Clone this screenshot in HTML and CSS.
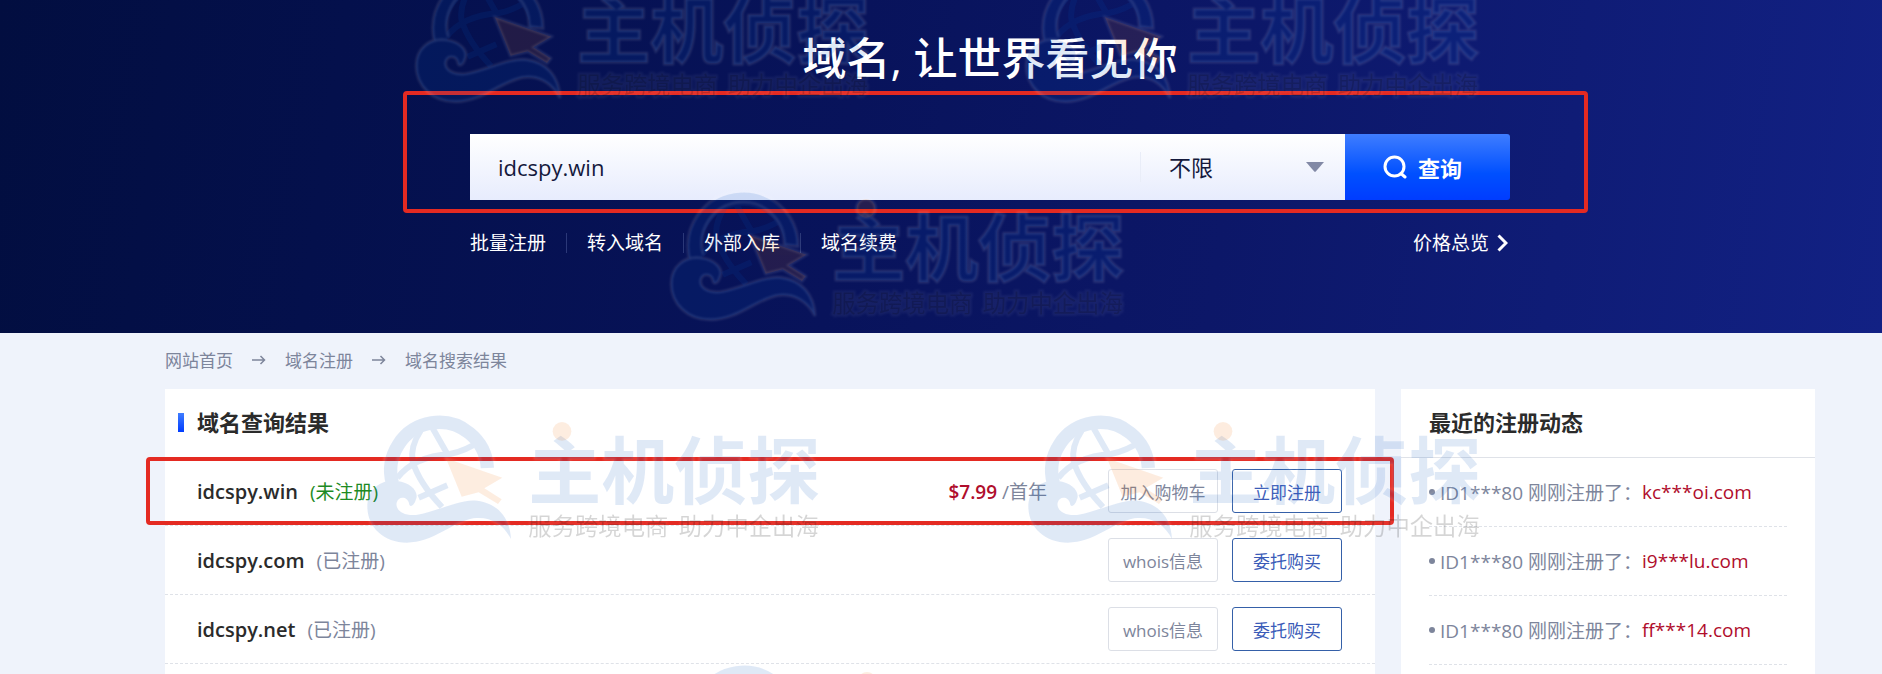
FILE: index.html
```html
<!DOCTYPE html>
<html lang="zh-CN">
<head>
<meta charset="utf-8">
<title>域名搜索结果</title>
<link rel="stylesheet" href="styles.css">
</head>
<body>
<header class="hero">
  <div class="hero-inner">
    <h1 class="hero-title">域名, 让世界看见你</h1>
    <form class="search">
      <input class="search-input" type="text" value="idcspy.win" aria-label="域名">
      <div class="suffix">
        <select class="suffix-select" aria-label="后缀"><option>不限</option></select>
        <svg class="suffix-arrow" viewBox="0 0 18 10" aria-hidden="true"><path d="M0 0H18L10 9.300Q9 10.300 8 9.300Z" fill="#8289a6"/></svg>
      </div>
      <button class="search-button" type="button">
        <svg class="search-icon" viewBox="0 0 24 24" fill="none" stroke="#fff" stroke-width="3" stroke-linecap="round" aria-hidden="true"><circle cx="11.500" cy="11.500" r="9.500"/><path d="M18 18.500L22 22"/></svg>
        查询
      </button>
      <span class="callout callout-search"></span>
    </form>
    <nav class="hero-nav">
      <a class="hero-link" href="#">批量注册</a>
      <a class="hero-link" href="#">转入域名</a>
      <a class="hero-link" href="#">外部入库</a>
      <a class="hero-link" href="#">域名续费</a>
      <a class="price-link" href="#">价格总览
        <svg class="chevron" viewBox="0 0 11 18" fill="none" stroke="#fff" stroke-width="3" aria-hidden="true"><path d="M1.500 1.500L9 9L1.500 16.500"/></svg>
      </a>
    </nav>
  </div>
</header>

<main class="page">
  <nav class="crumbs">
    <a class="crumb" href="#">网站首页</a>
    <svg class="crumb-arrow" viewBox="0 0 14 10" aria-hidden="true"><path d="M0 5H12.500M8.500 1L12.500 5L8.500 9"/></svg>
    <a class="crumb" href="#">域名注册</a>
    <svg class="crumb-arrow" viewBox="0 0 14 10" aria-hidden="true"><path d="M0 5H12.500M8.500 1L12.500 5L8.500 9"/></svg>
    <span class="crumb">域名搜索结果</span>
  </nav>
  <div class="columns">
    <section class="card results">
      <h2 class="card-title results-title">域名查询结果</h2>
      <ul class="list">
        <li class="result">
          <strong class="domain">idcspy.win</strong>
          <span class="status status-free">(未注册)</span>
          <span class="price"><b class="amount">$7.99</b> /首年</span>
          <button class="btn" type="button">加入购物车</button>
          <button class="btn btn-primary" type="button">立即注册</button>
          <span class="callout callout-row"></span>
        </li>
        <li class="result">
          <strong class="domain">idcspy.com</strong>
          <span class="status">(已注册)</span>
          <button class="btn" type="button">whois信息</button>
          <button class="btn btn-primary" type="button">委托购买</button>
        </li>
        <li class="result">
          <strong class="domain">idcspy.net</strong>
          <span class="status">(已注册)</span>
          <button class="btn" type="button">whois信息</button>
          <button class="btn btn-primary" type="button">委托购买</button>
        </li>
      </ul>
    </section>
    <aside class="card recent">
      <h2 class="card-title recent-title">最近的注册动态</h2>
      <ul class="list recent-list">
        <li class="event">ID1***80 刚刚注册了：<a class="event-domain" href="#">kc***oi.com</a></li>
        <li class="event">ID1***80 刚刚注册了：<a class="event-domain" href="#">i9***lu.com</a></li>
        <li class="event">ID1***80 刚刚注册了：<a class="event-domain" href="#">ff***14.com</a></li>
      </ul>
    </aside>
  </div>
</main>

<div class="marks" aria-hidden="true">
  <svg class="defs">
    <defs>
      <filter id="soft"><feGaussianBlur stdDeviation="3"/></filter>
      <g id="blue">
        <path d="M97 219A145 145 0 1 1 382 174" fill="none" stroke-width="40" class="line"/>
        <path d="M112 204Q160 140 270 132Q320 122 360 92M218 55L262 132M182 62Q150 110 158 155Q178 220 246 291M176 263L262 226" fill="none" stroke-width="18" class="line"/>
      </g>
      <path id="wave" d="M22 290C22 240 60 206 112 213C152 218 178 245 168 268C162 290 148 294 147 280C143 260 116 256 110 278C106 300 128 318 168 315C235 304 300 265 352 272C412 280 450 322 453 387C430 342 390 318 340 325C270 340 220 398 140 398C70 398 22 350 22 290Z"/>
      <path id="pointer" d="M258 145L427 203L373 235L425 268L414 282L356 247L305 260Z"/>
      <circle id="dot" cx="606" cy="64" r="28"/>
      <text id="name" x="505" y="264" class="mark-name">主机侦探</text>
      <text id="slogan" x="505" y="374" class="mark-slogan">服务跨境电商  助力中企出海</text>
      <g id="mark">
        <g class="glow" filter="url(#soft)">
          <path d="M76 214A165 165 0 1 1 402 178L361 172A124 124 0 1 0 118 204" fill="none"/>
          <use href="#wave"/><use href="#pointer"/><use href="#dot"/><use href="#name"/>
        </g>
        <g class="glow glow-thin" filter="url(#soft)"><use href="#slogan"/></g>
        <g class="mark-blue"><use href="#blue"/><use href="#wave"/><use href="#name"/></g>
        <g class="mark-orange"><use href="#pointer"/><use href="#dot"/></g>
        <g class="mark-dark"><use href="#slogan"/></g>
      </g>
    </defs>
  </svg>
  <svg class="mark mark-1" viewBox="9 0 1392 420"><use href="#mark"/></svg>
  <svg class="mark mark-2" viewBox="9 0 1392 420"><use href="#mark"/></svg>
  <svg class="mark mark-3" viewBox="9 0 1392 420"><use href="#mark"/></svg>
  <svg class="mark mark-4" viewBox="9 0 1392 420"><use href="#mark"/></svg>
  <svg class="mark mark-5" viewBox="9 0 1392 420"><use href="#mark"/></svg>
  <svg class="mark mark-6" viewBox="9 0 1392 420"><use href="#mark"/></svg>
</div>
</body>
</html>
```
FILE: styles.css
```css
* { box-sizing: border-box; }

body {
  position: relative;
  display: flex;
  flex-direction: column;
  min-height: 100vh;
  margin: 0;
  background: #eff3fb;
  color: #7d859b;
  font-family: "Open Sans", "Noto Sans CJK SC", sans-serif;
  font-size: 19px;
}

a { color: inherit; text-decoration: none; }
button, input, select { font-family: inherit; }

.hero {
  padding: 26px 67px 76px 165px;
  background: linear-gradient(98deg, #020e40 0%, #04104c 18%, #08135b 45%, #0c1768 65%, #122184 100%);
  color: #fff;
}
.hero-inner { max-width: 1040px; margin: 0 auto; }
.hero-title {
  margin: 0 0 44px;
  font-size: 44px;
  font-weight: 500;
  line-height: 64px;
  text-align: center;
}

.search { position: relative; display: flex; height: 66px; }
.search-input {
  flex: 1;
  min-width: 0;
  padding: 0 28px;
  border: 0;
  background: linear-gradient(#fff, #e7ecfd);
  color: #14193c;
  font-size: 22px;
}
.suffix {
  display: flex;
  align-items: center;
  width: 205px;
  padding-right: 21px;
  background: linear-gradient(#fff, #e7ecfd);
}
.suffix-select {
  flex: 1;
  height: 30px;
  padding: 0 0 0 28px;
  border: 0;
  border-left: 1px solid #e9edf8;
  appearance: none;
  background: none;
  color: #14193c;
  font-size: 22px;
  line-height: 30px;
}
.suffix-arrow { width: 18px; height: 10px; }
.search-button {
  display: flex;
  align-items: center;
  justify-content: center;
  gap: 11px;
  width: 165px;
  padding: 0 10px 0 0;
  border: 0;
  border-radius: 0 3px 3px 0;
  background: linear-gradient(#3f7dff, #0050ff 60%, #003cff);
  color: #fff;
  font-size: 22px;
  font-weight: 700;
}
.search-icon { width: 24px; height: 24px; }

.hero-nav { display: flex; margin-top: 29px; line-height: 28px; }
.hero-link { display: flex; align-items: center; }
.hero-link + .hero-link::before {
  content: "";
  width: 1px;
  height: 20px;
  margin: 0 20px;
  background: #2b3878;
}
.price-link { display: flex; align-items: center; gap: 8px; margin: 0 2px 0 auto; }
.chevron { width: 11px; height: 18px; }

.page { display: flex; flex: 1; flex-direction: column; padding: 0 67px 0 165px; }
.crumbs {
  display: flex;
  align-items: center;
  gap: 19px;
  height: 56px;
  padding-bottom: 3px;
  font-size: 17px;
}
.crumb-arrow { width: 14px; height: 10px; fill: none; stroke: #7d859b; stroke-width: 1.500; }
.columns { display: flex; flex: 1; gap: 26px; }
.card { background: #fff; }
.results { flex: 1; }
.recent { width: 414px; }
.card-title {
  margin: 0;
  padding-bottom: 2px;
  color: #2b2b2b;
  font-size: 22px;
  font-weight: 700;
  line-height: 66px;
}
.results-title { display: flex; align-items: center; gap: 13px; padding-left: 13px; }
.results-title::before {
  content: "";
  width: 6px;
  height: 19px;
  background: linear-gradient(#3f7dff, #003cff);
}
.list { margin: 0; padding: 0; list-style: none; }
.result {
  position: relative;
  display: flex;
  align-items: center;
  height: 69px;
  padding: 0 33px 0 32px;
  border-bottom: 1px dashed #dfe2e8;
}
.domain { margin-right: 12px; color: #2b2b2b; font-size: 20px; font-weight: 600; }
.status { margin-right: auto; }
.status-free { color: #1d8a24; }
.price { margin-right: 61px; }
.amount { color: #b00d2c; font-weight: 600; }
.btn {
  width: 110px;
  height: 44px;
  padding: 0;
  border: 1px solid #dcdfe6;
  border-radius: 3px;
  background: #fff;
  color: #7d859b;
  font-size: 17px;
}
.btn-primary { margin-left: 14px; border-color: #3560a8; color: #3a5bb8; }

.recent-title { padding-left: 28px; border-bottom: 1px solid #dfe2e8; }
.recent-list { padding: 0 28px; }
.event {
  display: flex;
  align-items: center;
  height: 69px;
  border-bottom: 1px dashed #dfe2e8;
  white-space: pre;
}
.event::before {
  content: "";
  width: 6px;
  height: 6px;
  margin-right: 5px;
  border-radius: 50%;
  background: #7d859b;
}
.event-domain { color: #b00d2c; }

.callout { position: absolute; border: 4px solid #e42a22; border-radius: 4px; pointer-events: none; }
.callout-search { inset: -43px -78px -13px -67px; }
.callout-row { inset: 0 -19px; }

.marks { position: absolute; inset: 0; overflow: hidden; pointer-events: none; }
.defs { position: absolute; width: 0; height: 0; }
.mark { position: absolute; width: 464px; height: 140px; }
.mark-1 { left: 412px; top: -31px; }
.mark-2 { left: 1022px; top: -31px; }
.mark-3 { left: 667px; top: 187px; }
.mark-4 { left: 363px; top: 410px; }
.mark-5 { left: 1024px; top: 410px; }
.mark-6 { left: 668px; top: 660px; }
.mark-name { font-family: "Noto Sans CJK SC", sans-serif; font-size: 219px; font-weight: 700; }
.mark-slogan { font-family: "Noto Sans CJK SC", sans-serif; font-size: 70px; white-space: pre; }
.mark-blue { opacity: .12; fill: #0052be; }
.line { stroke: #0052be; }
.mark-orange { opacity: .12; fill: #f06c00; }
.mark-dark { opacity: .16; fill: #000; }
.glow { opacity: .12; fill: none; stroke: #fff; stroke-width: 8; }
.glow-thin { opacity: .05; stroke-width: 12; }
```
